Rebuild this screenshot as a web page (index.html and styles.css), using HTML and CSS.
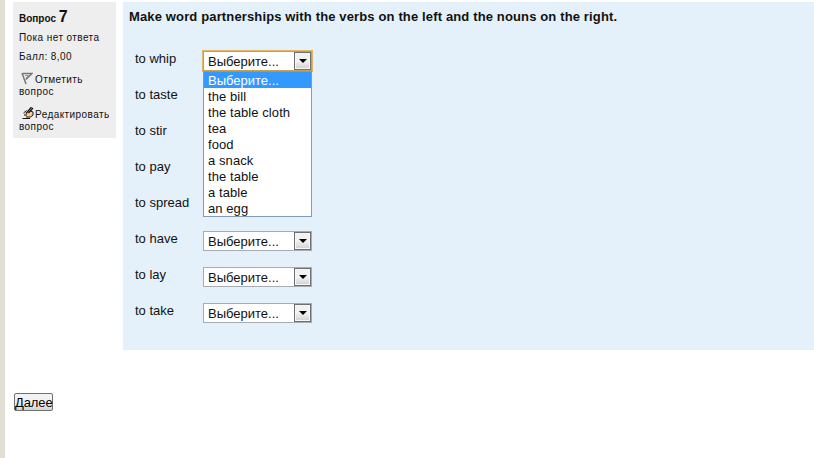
FILE: index.html
```html
<!DOCTYPE html>
<html lang="ru">
<head>
<meta charset="utf-8">
<title>Вопрос 7</title>
<link rel="stylesheet" href="styles.css">
</head>
<body>
<main class="page">
  <section class="question">
    <aside class="info">
      <h3 class="number">Вопрос <span class="value">7</span></h3>
      <p class="state">Пока нет ответа</p>
      <p class="grade">Балл: 8,00</p>
      <p class="action flag"><svg class="icon" width="12" height="13" viewBox="0 0 12 13"><path d="M1 1 5 12M1.500 1.500H11L4.800 7.500" fill="none" stroke="#777" stroke-width="1.500"/><path d="M4 3.500h3.500L5 6" fill="none" stroke="#999"/></svg><a>Отметить<br>вопрос</a></p>
      <p class="action edit"><svg class="icon" width="12" height="13" viewBox="0 0 12 13"><path d="M2 6 6 4 10.500 5.500V10H4L2 8z" fill="#f8cf9c"/><path d="M9.500 0 4 6.500M11 1 6.500 6" stroke="#111" stroke-width="1.200"/><path d="M4.500 3.500 1.500 6M2 8h3M.5 11.500H8M4 10h4.500L11 8V5L8.500 4" fill="none" stroke="#111"/></svg><a>Редактировать<br>вопрос</a></p>
    </aside>
    <div class="formulation">
      <h2 class="prompt">Make word partnerships with the verbs on the left and the nouns on the right.</h2>
      <div class="answers">
        <div class="row"><span class="verb">to whip</span>
          <div class="select open"><span class="current">Выберите...</span><span class="arrow"></span>
            <ul class="options">
              <li class="selected">Выберите...</li><li>the bill</li><li>the table cloth</li><li>tea</li><li>food</li><li>a snack</li><li>the table</li><li>a table</li><li>an egg</li>
            </ul>
          </div>
        </div>
        <div class="row"><span class="verb">to taste</span></div>
        <div class="row"><span class="verb">to stir</span></div>
        <div class="row"><span class="verb">to pay</span></div>
        <div class="row"><span class="verb">to spread</span></div>
        <div class="row"><span class="verb">to have</span><div class="select"><span class="current">Выберите...</span><span class="arrow"></span></div></div>
        <div class="row"><span class="verb">to lay</span><div class="select"><span class="current">Выберите...</span><span class="arrow"></span></div></div>
        <div class="row"><span class="verb">to take</span><div class="select"><span class="current">Выберите...</span><span class="arrow"></span></div></div>
      </div>
    </div>
  </section>
  <button class="next">Далее</button>
</main>
</body>
</html>
```
FILE: styles.css
```css
* { box-sizing: border-box; }
body {
  margin: 0;
  background: #fff;
  color: #111;
  font-family: "Liberation Sans", Arial, sans-serif;
  font-size: 13px;
}
.page {
  height: 458px;
  overflow: hidden;
  border-left: 5px solid #e2ded3;
  padding: 2px 0 0 8px;
}
.question { display: flex; align-items: flex-start; gap: 7px; }
.info {
  width: 103px;
  height: 136px;
  padding: 6px 0 0 6px;
  background: #eee;
  font-size: 10px;
  line-height: 12px;
  letter-spacing: 0.42px;
  white-space: nowrap;
}
.info p, .number { margin: 0; }
.number { height: 17px; font-size: 10px; line-height: 17px; letter-spacing: 0; }
.value { font-size: 16px; }
.info .state { margin-top: 7px; }
.info .grade { margin-top: 7px; }
.info .action { margin-top: 11px; }
.info .edit { margin-top: 11px; }
.icon { display: inline-block; margin: -6px 1px -2px 3px; vertical-align: 0; }
.flag .icon { margin-left: 2px; margin-right: 2px; }
.formulation {
  flex: 1;
  height: 348px;
  padding: 6px;
  background: #e4f1fa;
}
.prompt { margin: 0; font-size: 13px; line-height: 17px; letter-spacing: 0.14px; white-space: nowrap; }
.answers { padding: 26px 0 0 6px; }
.row { display: flex; height: 36px; }
.verb { width: 68px; line-height: 16px; }
.select {
  position: relative;
  display: flex;
  justify-content: space-between;
  width: 109px;
  height: 20px;
  border: 1px solid #a5acb2;
  background: #fff;
}
.current { padding-left: 4px; line-height: 20px; }
.arrow {
  display: grid;
  place-items: center;
  width: 17px;
  height: 18px;
  border: 1px solid #707070;
  background: linear-gradient(#f2f2f2 50%, #d0d0d0);
  box-shadow: inset 0 0 0 1px #f7f7f7;
}
.arrow::before {
  content: "";
  border: 4px solid transparent;
  border-top-color: #000;
  border-bottom: 0;
}
.open { border-color: #c9a050; box-shadow: 0 0 0 1px #dfb765; }
.options {
  position: absolute;
  z-index: 1;
  top: 19px;
  left: -1px;
  width: 109px;
  height: 146px;
  margin: 0;
  padding: 0;
  overflow: hidden;
  list-style: none;
  border: 1px solid #7f9db9;
  background: #fff;
}
.options li { height: 16px; padding-left: 4px; line-height: 17px; letter-spacing: 0.08px; }
.options .selected { background: #39f; color: #fff; letter-spacing: 0; }
.next {
  display: block;
  width: 39px;
  height: 18px;
  margin: 43px 0 0 1px;
  padding: 0;
  border: 1px solid #707070;
  border-radius: 2px;
  background: linear-gradient(#f2f2f2 50%, #d2d2d2);
  color: #000;
  font: 13px/17px "Liberation Sans", Arial, sans-serif;
  letter-spacing: -0.1px;
}
```
